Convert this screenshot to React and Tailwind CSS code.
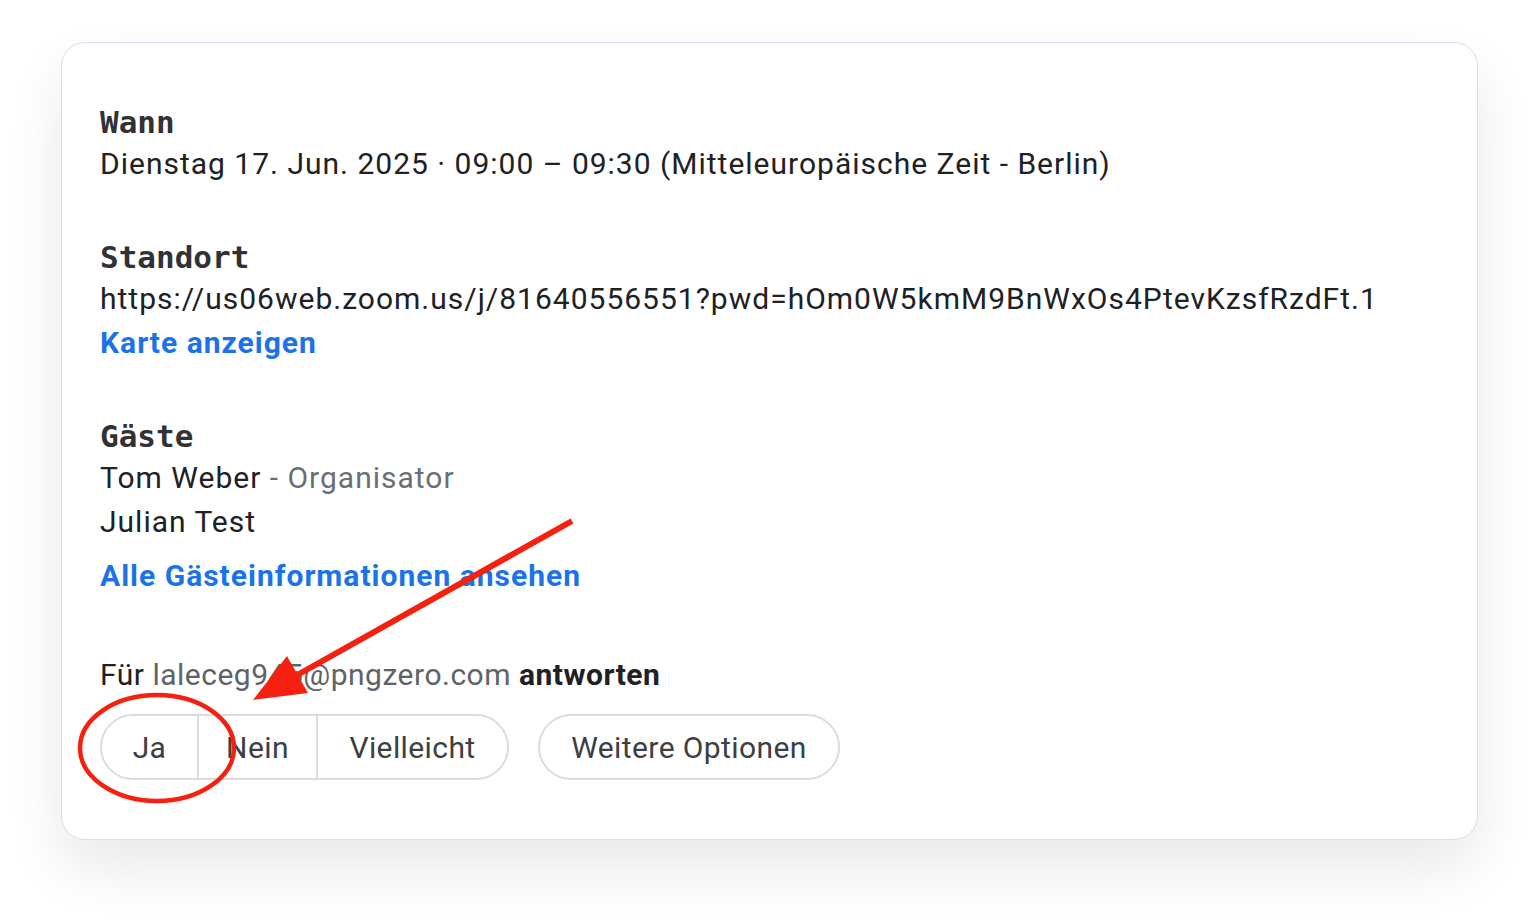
export default function App() {
  return (
    <div className="relative w-[1539px] h-[920px] bg-white pt-[42px] px-[61px] overflow-hidden" style={{ fontFamily: "Roboto, 'Liberation Sans', sans-serif" }}>
      <div className="w-[1417px] h-[798px] rounded-[24px] border border-[#d9ddf3] bg-white shadow-[0_28px_60px_rgba(0,0,0,0.09)] pl-[38px] pt-[59px] text-[30px] text-[#202124] tracking-[1px]">
        <h2 className="font-bold leading-[40px] text-[31px] text-[#303236] tracking-normal" style={{ fontFamily: "'DejaVu Sans Mono', 'Liberation Mono', monospace" }}>Wann</h2>
        <p className="leading-[44px]">Dienstag 17. Jun. 2025 · 09:00 – 09:30 (Mitteleuropäische Zeit - Berlin)</p>

        <h2 className="mt-[51px] font-bold leading-[40px] text-[31px] text-[#303236] tracking-normal" style={{ fontFamily: "'DejaVu Sans Mono', 'Liberation Mono', monospace" }}>Standort</h2>
        <p className="leading-[44px]">https://us06web.zoom.us/j/81640556551?pwd=hOm0W5kmM9BnWxOs4PtevKzsfRzdFt.1</p>
        <a className="block leading-[44px] font-bold text-[#1a73e8]">Karte anzeigen</a>

        <h2 className="mt-[51px] font-bold leading-[40px] text-[31px] text-[#303236] tracking-normal" style={{ fontFamily: "'DejaVu Sans Mono', 'Liberation Mono', monospace" }}>Gäste</h2>
        <p className="leading-[44px]">Tom Weber <span className="text-[#6b6f75]">- Organisator</span></p>
        <p className="leading-[44px]">Julian Test</p>
        <a className="block mt-[10px] leading-[44px] font-bold text-[#1a73e8]">Alle Gästeinformationen ansehen</a>

        <p className="mt-[55px] leading-[44px] tracking-[0.5px]">
          Für <span className="text-[#5f6368]">laleceg945@pngzero.com</span> <span className="font-bold">antworten</span>
        </p>

        <div className="mt-[17px] flex items-center gap-[29px] text-[#3c4043] tracking-[0.4px]">
          <div className="flex h-[66px] rounded-full border-2 border-[#dadce0] overflow-hidden">
            <button className="w-[97px] flex items-center justify-center border-r-2 border-[#dadce0]">Ja</button>
            <button className="w-[119px] flex items-center justify-center border-r-2 border-[#dadce0]">Nein</button>
            <button className="w-[189px] flex items-center justify-center">Vielleicht</button>
          </div>
          <button className="h-[66px] w-[302px] rounded-full border-2 border-[#dadce0] flex items-center justify-center">Weitere Optionen</button>
        </div>
      </div>

      <svg className="absolute left-0 top-0 pointer-events-none" width="1539" height="920" viewBox="0 0 1539 920">
        <ellipse cx="157" cy="748" rx="77" ry="53" fill="none" stroke="#f5200f" strokeWidth="4.5" />
        <line x1="572" y1="521" x2="292" y2="678" stroke="#f5200f" strokeWidth="6" />
        <polygon points="253,700 308,693 287,656" fill="#f5200f" />
      </svg>
    </div>
  );
}
